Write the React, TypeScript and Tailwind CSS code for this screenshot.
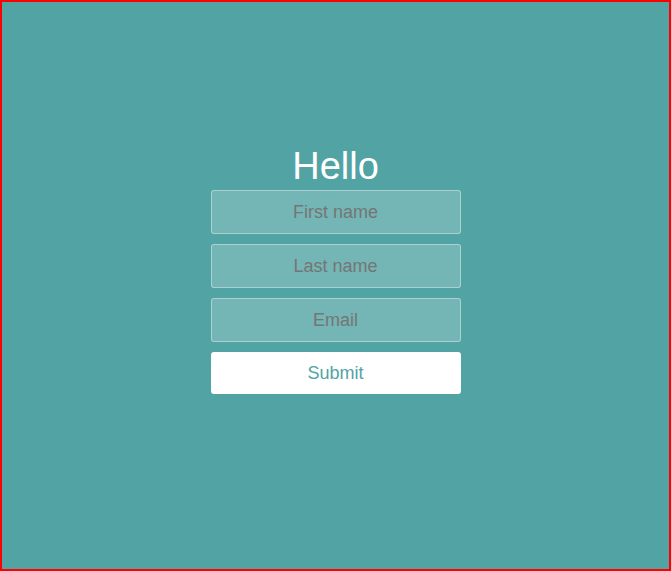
export default function App() {
  const fields = ['First name', 'Last name', 'Email']

  return (
    <div className="box-border flex h-[571px] w-[671px] flex-col items-center border-2 border-[#ff0000] bg-[#52a3a3] pt-[140px] font-['Liberation_Sans',Arial,sans-serif]">
      <h1 className="text-[38px] leading-[48px] font-normal text-white">Hello</h1>
      <form className="flex w-[250px] flex-col gap-[10px]" onSubmit={(e) => e.preventDefault()}>
        {fields.map((f) => (
          <input
            key={f}
            type="text"
            placeholder={f}
            className="box-border h-[44px] w-full rounded-[3px] border border-white/40 bg-white/20 text-center text-[18px] text-white placeholder:text-[#757575] outline-none"
          />
        ))}
        <button
          type="submit"
          className="h-[42px] w-full rounded-[3px] bg-white text-[18px] text-[#52a3a3]"
        >
          Submit
        </button>
      </form>
    </div>
  )
}
